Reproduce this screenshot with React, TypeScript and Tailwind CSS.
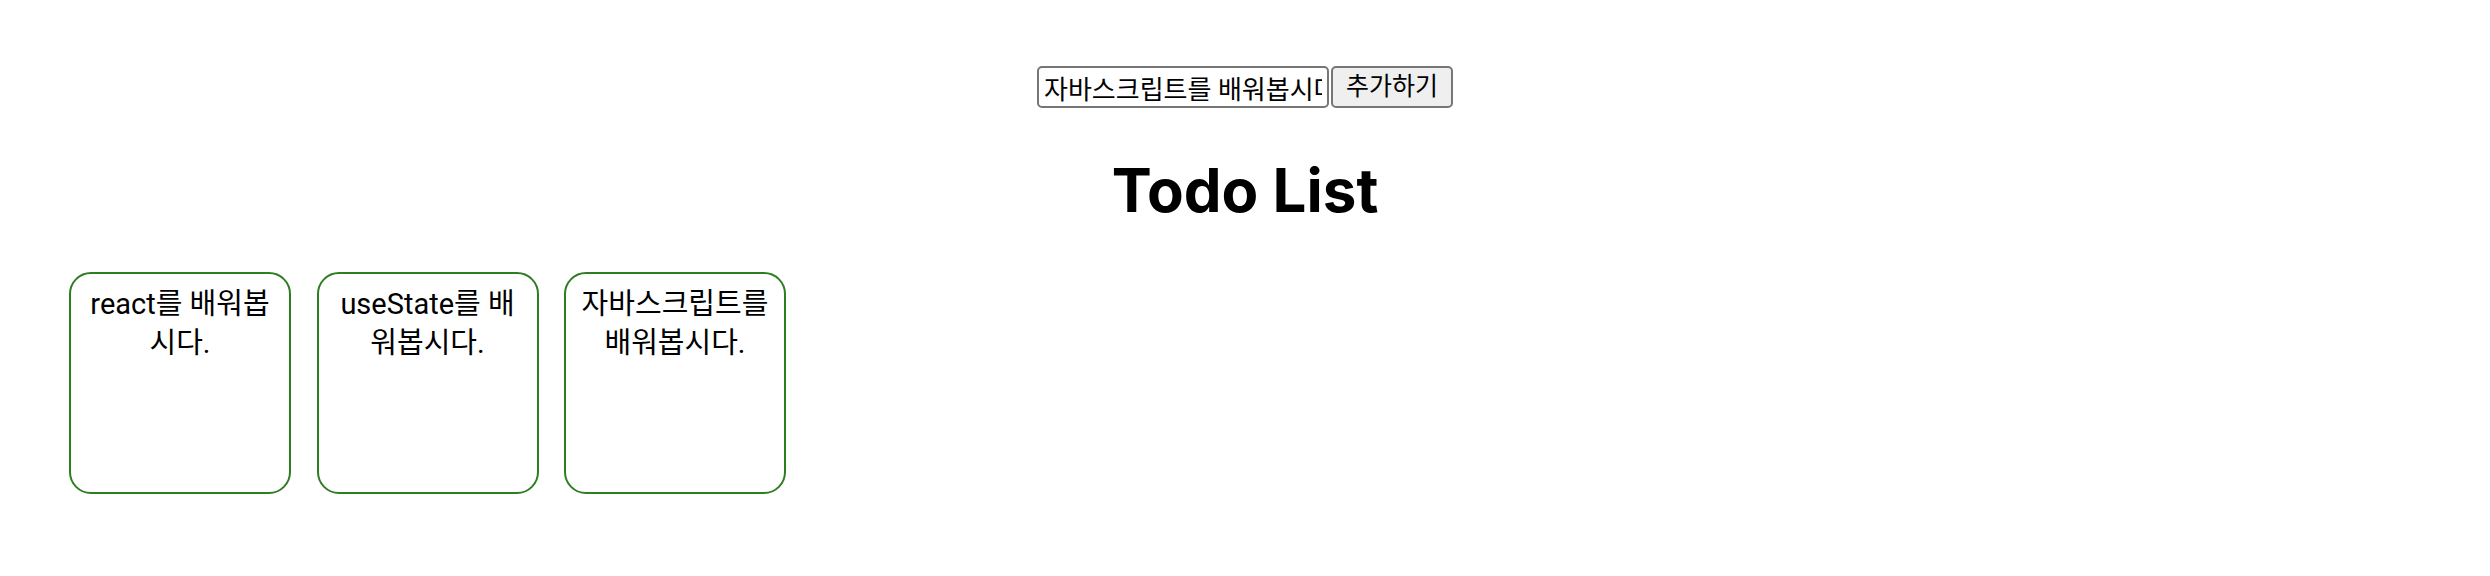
import { useState } from 'react';

const initialTodos = [
  { id: 1, text: 'react를 배워봅시다.' },
  { id: 2, text: 'useState를 배워봅시다.' },
  { id: 3, text: '자바스크립트를 배워봅시다.' },
];

export default function App() {
  const [todos, setTodos] = useState(initialTodos);
  const [input, setInput] = useState('자바스크립트를 배워봅시다');

  const handleAdd = () => {
    if (!input.trim()) return;
    setTodos([...todos, { id: Date.now(), text: input }]);
    setInput('');
  };

  return (
    <div className="min-h-[576px] bg-white text-black font-['Roboto','Noto_Sans_CJK_KR',sans-serif]">
      <div className="flex justify-center gap-[2px] pt-[66px]">
        <input
          value={input}
          onChange={(e) => setInput(e.target.value)}
          className="w-[292px] h-[42px] px-[5px] border-2 border-[#767676] rounded-[5px] bg-white text-[26px] outline-none"
        />
        <button
          onClick={handleAdd}
          className="w-[122px] h-[42px] border-2 border-[#767676] rounded-[5px] bg-[#efefef] text-[25px]"
        >
          추가하기
        </button>
      </div>

      <h1 className="mt-[46px] text-center font-['Inter',sans-serif] text-[60px] font-bold leading-[72px]">
        Todo List
      </h1>

      <div className="flex gap-[25.5px] pl-[69px] mt-[46px]">
        {todos.map((todo) => (
          <div
            key={todo.id}
            className="w-[222px] h-[222px] shrink-0 border-2 border-[#2f7d22] rounded-[22px] px-[12px] pt-[11px] text-center text-[29px] leading-[39px]"
          >
            {todo.text}
          </div>
        ))}
      </div>
    </div>
  );
}
